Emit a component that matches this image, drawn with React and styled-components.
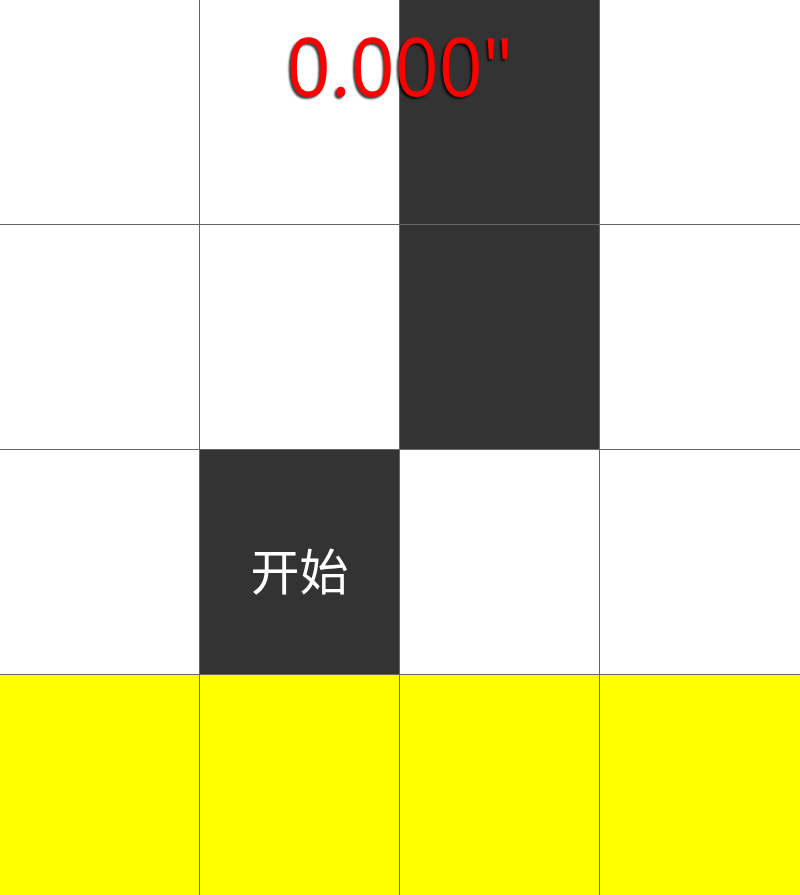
import styled, { createGlobalStyle } from 'styled-components';

const GlobalStyle = createGlobalStyle`
  html, body, #root {
    height: 100%;
    margin: 0;
    padding: 0;
  }
  body {
    overflow: hidden;
    font-family: "Open Sans", "Noto Sans CJK SC", sans-serif;
  }
`

const Board = styled.div`
  position: relative;
  height: 100%;
  overflow: hidden;
`

const Row = styled.div`
  height: 225px;
  display: flex;
`

const Cell = styled.div`
  width: 25%;
  box-sizing: border-box;
  border-right: 1px solid #666;
  border-bottom: 1px solid #666;
  background: ${p => p.$tone === 'black' ? '#333' : p.$tone === 'yellow' ? '#ff0' : '#fff'};
  display: flex;
  align-items: center;
  justify-content: center;
  padding-top: 12px;
  color: #fff;
  font-family: "Noto Sans CJK SC", sans-serif;
  font-size: 49px;
  &:last-child {
    border-right: none;
  }
`

const Timer = styled.div`
  position: absolute;
  top: 21px;
  left: 0;
  right: 0;
  text-align: center;
  color: #f00;
  font-family: "Open Sans", sans-serif;
  font-size: 80px;
  line-height: 1.1;
  transform: scaleX(0.96);
  text-shadow: -2px 2px 2px rgba(0, 0, 0, 0.75);
  pointer-events: none;
`

const rows = [
  ['white', 'white', 'black', 'white'],
  ['white', 'white', 'black', 'white'],
  ['white', 'black', 'white', 'white'],
  ['yellow', 'yellow', 'yellow', 'yellow'],
]

const App = () => {
  return (
    <Board>
      <GlobalStyle />
      {rows.map((row, i) => (
        <Row key={i}>
          {row.map((tone, j) => (
            <Cell key={j} $tone={tone}>
              {i === 2 && j === 1 ? '开始' : null}
            </Cell>
          ))}
        </Row>
      ))}
      <Timer>0.000"</Timer>
    </Board>
  )
}

export default App
